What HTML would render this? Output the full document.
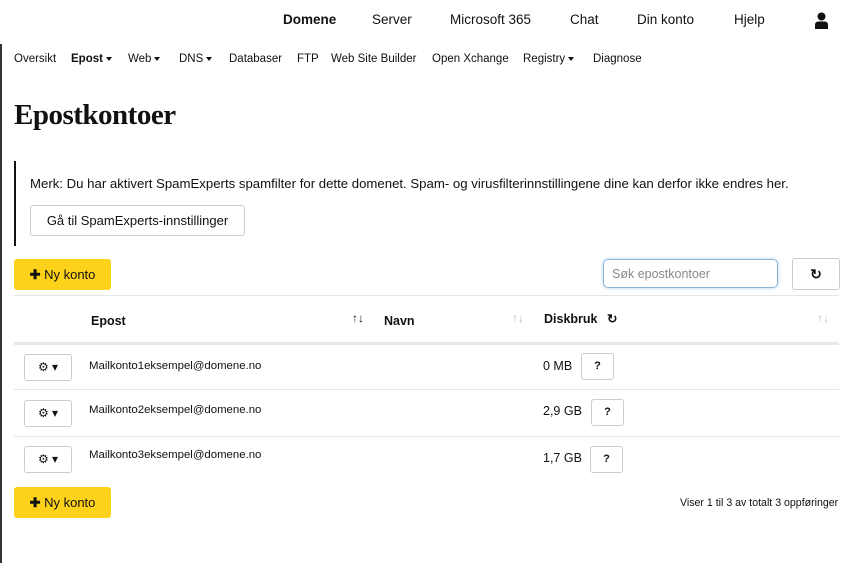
<!DOCTYPE html>
<html><head><meta charset="utf-8"><style>
body{margin:0;width:850px;height:563px;background:#fff;font-family:"Liberation Sans",sans-serif;color:#111;position:relative;overflow:hidden}
.a{position:absolute;white-space:nowrap}
.top{font-size:13.5px;top:12px}
.sub{font-size:11.5px;top:53px}
.car{display:inline-block;border-left:3px solid transparent;border-right:3px solid transparent;border-top:4px solid #111;vertical-align:middle;margin-left:3px}
.btn{position:absolute;border:1px solid #ccc;border-radius:3px;background:#fff}
.yel{position:absolute;background:#fed11a;border-radius:3px;font-size:13px;left:14px;width:97px;height:31px;line-height:31px;text-align:center}
.hr{position:absolute;left:14px;width:825px;height:1px;background:#e5e5e5}
.em{font-size:11.4px}
.q{position:absolute;width:31px;height:25px;border:1px solid #ccc;border-radius:3px;font-size:11px;font-weight:bold;text-align:center;line-height:25px}
.gear{position:absolute;left:24px;width:46px;height:25px;border:1px solid #ccc;border-radius:3px;font-size:12px;line-height:25px;text-align:center}
</style></head><body>
<div class="a top" style="left:283px;font-weight:bold">Domene</div>
<div class="a top" style="left:372px">Server</div>
<div class="a top" style="left:450px">Microsoft 365</div>
<div class="a top" style="left:570px">Chat</div>
<div class="a top" style="left:637px">Din konto</div>
<div class="a top" style="left:734px">Hjelp</div>
<svg class="a" style="left:815px;top:12px" width="13" height="17" viewBox="0 0 13 17"><circle cx="6.5" cy="4.5" r="4" fill="#111"/><path d="M0 17V13Q0 9.5 3.5 9.5H9.5Q13 9.5 13 13V17Z" fill="#111"/></svg>
<div class="a" style="left:0;top:44px;width:2px;height:519px;background:#333"></div>
<div class="a sub" style="left:14px">Oversikt</div>
<div class="a sub" style="left:71px;font-weight:bold">Epost<span class="car"></span></div>
<div class="a sub" style="left:128px">Web<span class="car"></span></div>
<div class="a sub" style="left:179px">DNS<span class="car"></span></div>
<div class="a sub" style="left:229px">Databaser</div>
<div class="a sub" style="left:297px">FTP</div>
<div class="a sub" style="left:331px">Web Site Builder</div>
<div class="a sub" style="left:432px">Open Xchange</div>
<div class="a sub" style="left:523px">Registry<span class="car"></span></div>
<div class="a sub" style="left:593px">Diagnose</div>
<div class="a" style="left:14px;top:99px;font-family:'Liberation Serif',serif;font-weight:bold;font-size:29px;letter-spacing:-0.5px">Epostkontoer</div>
<div class="a" style="left:14px;top:161px;width:2px;height:85px;background:#111"></div>
<div class="a" style="left:30px;top:176px;font-size:13.2px">Merk: Du har aktivert SpamExperts spamfilter for dette domenet. Spam- og virusfilterinnstillingene dine kan derfor ikke endres her.</div>
<div class="btn" style="left:30px;top:205px;width:213px;height:29px;line-height:29px;text-align:center;font-size:13px">Gå til SpamExperts-innstillinger</div>
<div class="yel" style="top:259px"><b>✚</b> Ny konto</div>
<div class="a" style="left:603px;top:259px;width:175px;height:29px;border:1px solid #8ab4d6;border-radius:5px;box-shadow:0 0 4px #b8d4ea;font-size:12.5px;line-height:29px;color:#888;padding-left:8px;box-sizing:border-box">Søk epostkontoer</div>
<div class="btn" style="left:792px;top:258px;width:46px;height:30px;text-align:center;line-height:30px;font-size:14px;font-weight:bold">↻</div>
<div class="hr" style="top:295px"></div>
<div class="a" style="left:91px;top:314px;font-size:12.5px;font-weight:bold">Epost</div>
<div class="a" style="left:352px;top:311px;font-size:12px">↑↓</div>
<div class="a" style="left:384px;top:314px;font-size:12.5px;font-weight:bold">Navn</div>
<div class="a" style="left:512px;top:311px;font-size:12px;color:#bbb">↑↓</div>
<div class="a" style="left:544px;top:311px;font-size:12.5px;font-weight:bold">Diskbruk <span style="margin-left:6px">↻</span></div>
<div class="a" style="left:817px;top:311px;font-size:12px;color:#bbb">↑↓</div>
<div class="hr" style="top:342px;height:3px;background:#e8e8e8"></div>
<div class="gear" style="top:354px">⚙ ▾</div>
<div class="a em" style="left:89px;top:360px">Mailkonto1eksempel@domene.no</div>
<div class="a" style="left:543px;top:359px;font-size:12.5px">0 MB</div>
<div class="q" style="left:581px;top:353px">?</div>
<div class="hr" style="top:389px"></div>
<div class="gear" style="top:400px">⚙ ▾</div>
<div class="a em" style="left:89px;top:404px">Mailkonto2eksempel@domene.no</div>
<div class="a" style="left:543px;top:404px;font-size:12.5px">2,9 GB</div>
<div class="q" style="left:591px;top:399px">?</div>
<div class="hr" style="top:436px"></div>
<div class="gear" style="top:446px">⚙ ▾</div>
<div class="a em" style="left:89px;top:449px">Mailkonto3eksempel@domene.no</div>
<div class="a" style="left:543px;top:451px;font-size:12.5px">1,7 GB</div>
<div class="q" style="left:590px;top:446px">?</div>
<div class="yel" style="top:487px"><b>✚</b> Ny konto</div>
<div class="a" style="left:680px;top:497px;font-size:10.6px">Viser 1 til 3 av totalt 3 oppføringer</div>
</body></html>
